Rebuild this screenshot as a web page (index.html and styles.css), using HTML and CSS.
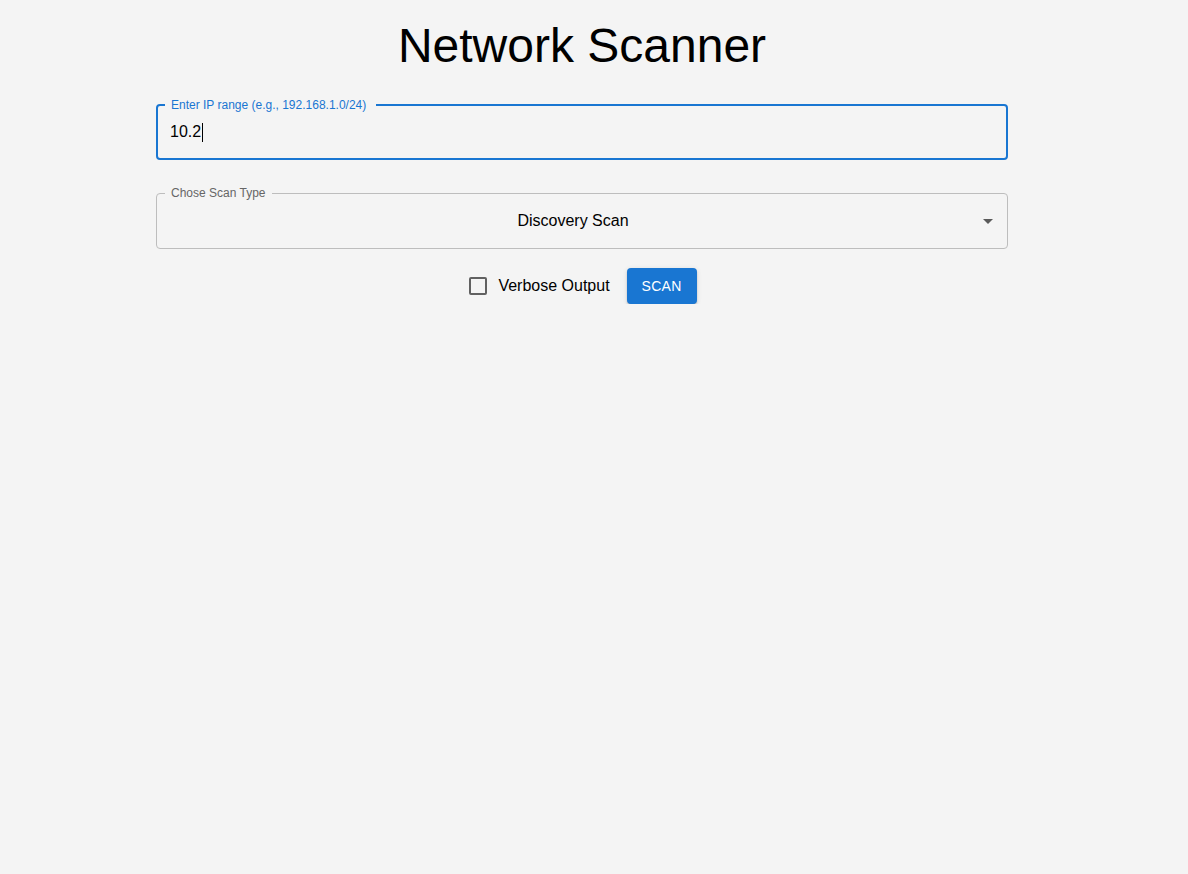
FILE: index.html
```html
<!DOCTYPE html>
<html lang="en">
<head>
<meta charset="utf-8">
<title>Network Scanner</title>
<link rel="stylesheet" href="styles.css">
</head>
<body>
<div class="app">
  <main class="page">
    <h1 class="title">Network Scanner</h1>
    <div class="field field-focused">
      <span class="field-label label-focused">Enter IP range (e.g., 192.168.1.0/24)</span>
      <div class="field-input"><span class="input-value">10.2</span><span class="caret"></span></div>
    </div>
    <div class="field field-select">
      <span class="field-label">Chose Scan Type</span>
      <div class="select-value">Discovery Scan</div>
      <svg class="select-arrow" viewBox="0 0 24 24" width="24" height="24"><path d="M7 10l5 5 5-5z" fill="#5a5a5a"/></svg>
    </div>
    <div class="actions">
      <label class="check">
        <span class="check-box"></span>
        <span class="check-text">Verbose Output</span>
      </label>
      <button class="btn">SCAN</button>
    </div>
  </main>
</div>
</body>
</html>
```
FILE: styles.css
```css
html, body {
  margin: 0;
  padding: 0;
  background: #f4f4f4;
  font-family: "Liberation Sans", Arial, sans-serif;
  color: #000;
}
.app {
  width: 1164px;
}
.page {
  width: 852px;
  margin: 0 auto;
  display: flex;
  flex-direction: column;
}
.title {
  margin: 18px 0 30px;
  font-size: 48px;
  font-weight: 400;
  line-height: 56px;
  text-align: center;
}
.field {
  position: relative;
  height: 56px;
  box-sizing: border-box;
  border: 1px solid #bdbdbd;
  border-radius: 4px;
  display: flex;
  align-items: center;
}
.field-focused {
  border: 2px solid #1976d2;
}
.field-label {
  position: absolute;
  top: -8px;
  left: 8px;
  padding: 0 6px 0 6px;
  background: #f4f4f4;
  font-size: 12px;
  line-height: 14px;
  color: #666;
}
.label-focused {
  top: -8px;
  left: 7px;
  padding: 0 10px 0 6px;
  color: #1976d2;
}
.field-input {
  padding-left: 12px;
  font-size: 16px;
  line-height: 20px;
  display: flex;
  align-items: center;
}
.caret {
  display: inline-block;
  width: 1px;
  height: 19px;
  background: #000;
  margin-left: 1px;
}
.field-select {
  margin-top: 33px;
}
.select-value {
  flex: 1;
  text-align: center;
  padding-right: 18px;
  font-size: 16px;
  line-height: 20px;
}
.select-arrow {
  position: absolute;
  right: 7px;
  top: 15px;
}
.actions {
  margin-top: 19px;
  display: flex;
  justify-content: center;
  align-items: center;
  gap: 17px;
  padding-left: 2px;
}
.check {
  display: flex;
  align-items: center;
  gap: 11px;
  font-size: 16px;
}
.check-box {
  width: 18px;
  height: 18px;
  box-sizing: border-box;
  border: 2px solid #616161;
  border-radius: 2px;
}
.btn {
  height: 36px;
  width: 70px;
  border: none;
  border-radius: 4px;
  background: #1976d2;
  color: #fff;
  font-family: "Liberation Sans", Arial, sans-serif;
  font-size: 14px;
  letter-spacing: 0.3px;
  box-shadow: 0 3px 1px -2px rgba(0,0,0,.2), 0 2px 2px 0 rgba(0,0,0,.14), 0 1px 5px 0 rgba(0,0,0,.12);
  padding: 0;
}
```
